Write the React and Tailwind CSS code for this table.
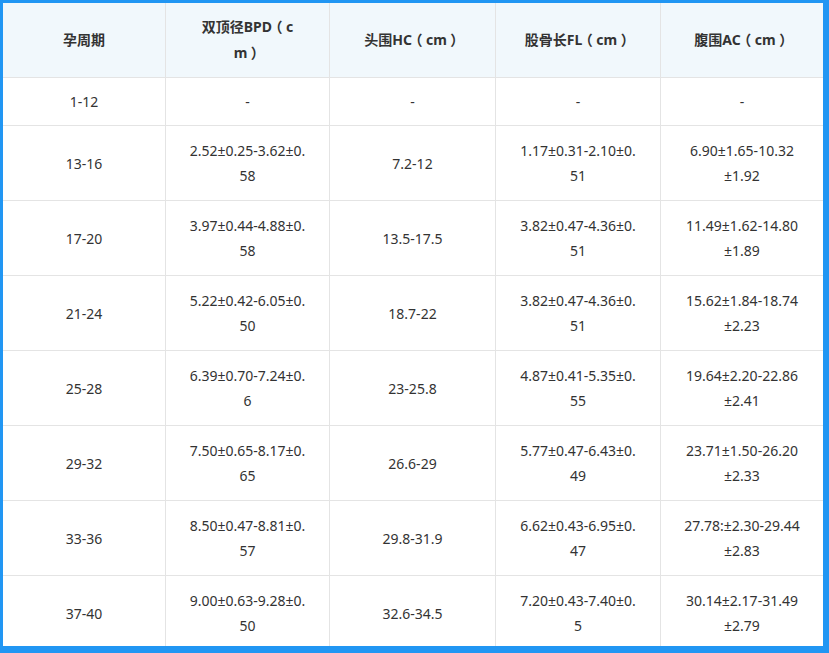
import React from "react";

const header = [["孕周期"], ["双顶径BPD（c", "m）"], ["头围HC（cm）"], ["股骨长FL（cm）"], ["腹围AC（cm）"]];

const rows = [
  [["1-12"], ["-"], ["-"], ["-"], ["-"]],
  [["13-16"], ["2.52±0.25-3.62±0.", "58"], ["7.2-12"], ["1.17±0.31-2.10±0.", "51"], ["6.90±1.65-10.32", "±1.92"]],
  [["17-20"], ["3.97±0.44-4.88±0.", "58"], ["13.5-17.5"], ["3.82±0.47-4.36±0.", "51"], ["11.49±1.62-14.80", "±1.89"]],
  [["21-24"], ["5.22±0.42-6.05±0.", "50"], ["18.7-22"], ["3.82±0.47-4.36±0.", "51"], ["15.62±1.84-18.74", "±2.23"]],
  [["25-28"], ["6.39±0.70-7.24±0.", "6"], ["23-25.8"], ["4.87±0.41-5.35±0.", "55"], ["19.64±2.20-22.86", "±2.41"]],
  [["29-32"], ["7.50±0.65-8.17±0.", "65"], ["26.6-29"], ["5.77±0.47-6.43±0.", "49"], ["23.71±1.50-26.20", "±2.33"]],
  [["33-36"], ["8.50±0.47-8.81±0.", "57"], ["29.8-31.9"], ["6.62±0.43-6.95±0.", "47"], ["27.78:±2.30-29.44", "±2.83"]],
  [["37-40"], ["9.00±0.63-9.28±0.", "50"], ["32.6-34.5"], ["7.20±0.43-7.40±0.", "5"], ["30.14±2.17-31.49", "±2.79"]],
];

function renderLine(text) {
  const parts = text.split(/([（）])/);
  return parts.map((p, i) =>
    p === "（" || p === "）" ? (
      <span key={i} className="inline-block px-[3.5px] [font-feature-settings:'halt']">{p}</span>
    ) : (
      <React.Fragment key={i}>{p}</React.Fragment>
    )
  );
}

function Cell({ lines, head }) {
  return (
    <div
      className={
        "flex flex-col items-center justify-center text-center text-[14px] text-[#333333] " +
        (head ? "bg-[#f1f8fc] font-bold leading-[26px]" : "bg-white leading-[25px]")
      }
    >
      {lines.map((l, i) => (
        <span key={i} className="whitespace-nowrap">{renderLine(l)}</span>
      ))}
    </div>
  );
}

export default function App() {
  return (
    <div
      className="w-[829px] h-[653px] overflow-hidden border-[#2196f3] border-t-[3px] border-l-[3px] border-r-[6px] border-b-[7px] bg-white"
      style={{ fontFamily: '"Noto Sans", "Noto Sans CJK SC", sans-serif' }}
    >
      <div className="grid grid-cols-[162px_163px_165px_164px_162px] grid-rows-[74px_47px_74px_74px_74px_74px_74px_74px_74px] gap-px bg-[#e4e4e4]">
        {header.map((h, i) => (
          <Cell key={"h" + i} lines={h} head />
        ))}
        {rows.map((r, ri) =>
          r.map((c, ci) => <Cell key={ri + "-" + ci} lines={c} />)
        )}
      </div>
    </div>
  );
}
